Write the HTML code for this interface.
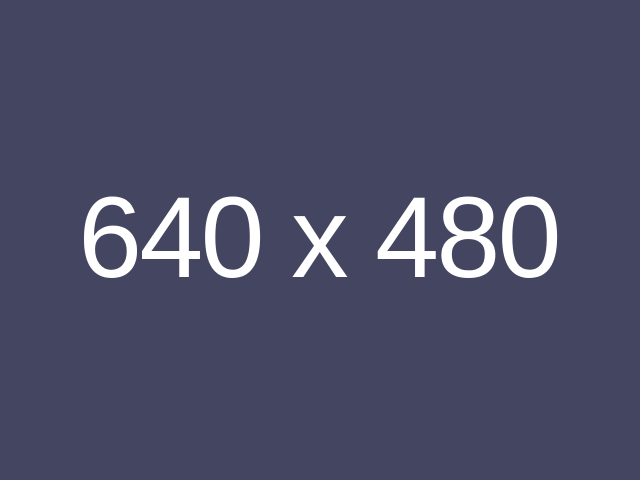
<!DOCTYPE html>
<html><head><style>
html,body{margin:0;padding:0;}
body{width:640px;height:480px;background:#444561;position:relative;overflow:hidden;}
.t{position:absolute;left:-3px;width:640px;top:181px;text-align:center;font-family:"Liberation Sans",sans-serif;font-size:115px;line-height:115px;color:#fff;white-space:nowrap;letter-spacing:-2.7px;text-indent:3px;}
</style></head><body><div class="t">640 x 480</div></body></html>
